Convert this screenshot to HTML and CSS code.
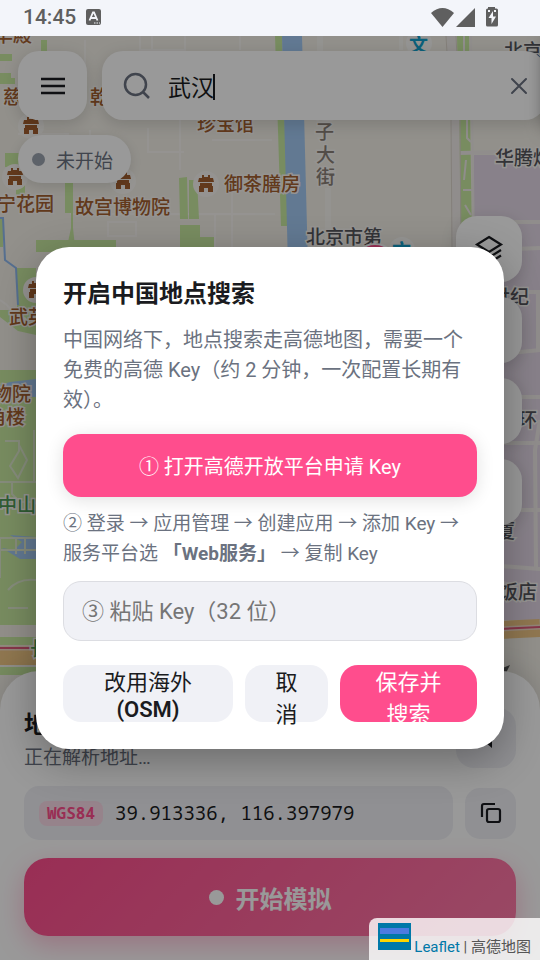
FILE: index.html
```
<!DOCTYPE html>
<html lang="zh-CN">
<head>
  <meta charset="UTF-8">
  <meta name="viewport" content="width=device-width, initial-scale=1.0">
  <title>地点搜索</title>
  <link rel="stylesheet" href="styles.css">
</head>
<body>

<header class="status-bar">
  <span class="clock">14:45</span>
  <svg class="app-badge" width="15" height="16" viewBox="0 0 15 16">
    <rect width="15" height="16" rx="2" fill="#5f5f5f"/>
    <path d="M3.500 11.500 7 3.500h1l3.500 8M5 9h5" fill="none" stroke="#f3f5fa" stroke-width="1.800"/>
    <path d="M8 14h1.500M10.500 14h1.500M13 14h1" stroke="#f3f5fa" stroke-width="1.200"/>
  </svg>
  <span class="spacer"></span>
  <svg width="68" height="20" viewBox="0 0 68 20" fill="#5f5f5f">
    <path d="M0 6Q11.500-4 23 6L11.500 20z"/>
    <path d="M25 20 44 1v19z"/>
    <path d="M57 1.500v-1.500h7v1.500h1.500q1.500 0 1.500 1.500v15q0 1.500-1.500 1.500h-9q-1.500 0-1.500-1.500v-15q0-1.500 1.500-1.500z"/>
    <path d="M62 4 57.500 11h3v6L65 9.500h-3zM57 3h2v2h-2zM63 3h2v2h-2z" fill="#f3f5fa"/>
  </svg>
</header>

<main class="app">
  <svg class="map" viewBox="0 36 540 924" preserveAspectRatio="xMinYMin slice" aria-hidden="true">
    <defs>
      <g id="temple">
        <circle r="13" fill="#f8f6f2"/>
        <path d="M-4-9h2v2h4v-2h2v3h3l1 4h-16l1-4h3zM-6-1h12v3h1v6H2V4h-4v4h-5V2h1z" fill="#a35f2f"/>
      </g>
    </defs>
    <rect y="36" width="540" height="924" fill="#f3f0e8"/>

    <!-- minor roads -->
    <g fill="none" stroke="#fbfaf8" stroke-width="2" opacity="0.6">
      <path d="M85 40v60M140 36v14h45v-14M152 36v84M240 36v14M18 134h50v45M90 130v50M148 128v24h36M180 120v50M212 140h60M70 214h205M215 214v33M232 190v57M108 222h28v14h-28zM0 300q14 8 14 20"/>
      <path d="M320 36v84M328 188v59" stroke-width="6"/>
      <path d="M401 36v14" stroke-width="4"/>
    </g>

    <!-- parks -->
    <g fill="#c8eaa0">
      <path d="M41 40h6v12h-6zM0 54h12v7H0zM0 73h11v5h4v6H0zM5 153h20v42h-9v-28H5zM65 183h8v45l2 19h-8l4-19v-15h-6zM179 178l8-1 1 42h-8zM189 180h8l2 39h-10zM180 225h20v12h14v10h-34z"/>
      <path d="M275 36h7l6 190h-7z"/>
      <path d="M457 36h12l3 211h-11z"/>
      <path d="M0 218h3v29H0zM17 268h19v67l-18-4-18-14v-7h17zM0 370h36v57H0zM0 427h36v198H0zM0 637h36v8H0zM0 667h60v8H0zM36 240h80v12H36z"/>
    </g>
    <path d="M282 36h20l6 230h-20z" fill="#a3caf4"/>
    <path d="M10 382l26-3v18H0v-12zM10 535l26 2v22H20L2 548l12 2 8-8z" fill="#a3caf4"/>
    <path d="M0 218h3l2 42 11 8 2 37" fill="none" stroke="#8fbaf0" stroke-width="2"/>

    <!-- right side blocks -->
    <path d="M474 155h66v465H474z" fill="#e3d8e6"/>
    <g fill="none" stroke="#f0ece9" stroke-width="4">
      <path d="M460 153l40-1M470 222h70M490 250l50-2M500 292h40M500 354l40-4M500 397h40M500 443h40M500 510h40M500 566l40 3M538 290v62M540 420l-5 30 1 117"/>
      <path d="M451 36l4 84 1 130" stroke-width="9"/>
      <path d="M471 36l3 211M463 190h9M464 36v18M467 120v18l4 4M466 160l-2 20M465 205l6 10" stroke-width="2"/>
    </g>
    <path d="M446 36l5 84 1 130M456 36l4 84 1 130" fill="none" stroke="#dcd5cc" stroke-width="1"/>

    <!-- park paths on the left -->
    <g fill="none" stroke="#dfe9cf" stroke-width="2">
      <path d="M5 441h14v10l-9 15 8 12 9-18-8-15M0 482h36M12 482v12l8 8h16M0 538v40M0 538h36M16 538v16M25 538v16M0 550h36M8 590q10-12 28-10M8 608h20M34 430v52"/>
      <path d="M0 631h36" stroke="#f3efe6" stroke-width="11"/>
    </g>
    <!-- ring road -->
    <path d="M0 656h40M500 630l40-2" fill="none" stroke="#f0c785" stroke-width="18"/>
    <path d="M0 648h40M500 629l40-2" fill="none" stroke="#f3dcc8" stroke-width="5"/>
    <path d="M0 648h40M500 629l40-2" fill="none" stroke="#df5a7b" stroke-width="2"/>

    <use href="#temple" x="31" y="126"/>
    <use href="#temple" x="15" y="177"/>
    <use href="#temple" x="123" y="181"/>
    <use href="#temple" x="206" y="184"/>
    <use href="#temple" x="36" y="290"/>
    <g class="label place">
      <text x="-6" y="42">华殿</text>
      <text x="3" y="104">慈宁宫</text>
      <text x="90" y="104">乾清宫</text>
      <text x="197" y="131">珍宝馆</text>
      <text x="-3" y="211">宁花园</text>
      <text x="75" y="214">故宫博物院</text>
      <text x="224" y="191">御茶膳房</text>
      <text x="9" y="324">武英殿</text>
      <text x="-7" y="401">物院</text>
      <text x="-13" y="424">角楼</text>
    </g>
    <g class="label park"><text x="-2" y="512">中山公园</text><text x="30" y="656">长安</text></g>
    <g class="label road">
      <text x="315" y="118">池</text>
      <text x="315" y="139">子</text>
      <text x="316" y="162">大</text>
      <text x="316" y="184">街</text>
    </g>
    <g class="label building">
      <text x="306" y="244">北京市第</text>
      <text x="504" y="58">北京</text>
      <text x="495" y="165">华腾烟</text>
      <text x="491" y="304">世纪</text>
      <text x="518" y="427">环</text>
      <text x="496" y="538">厦</text>
      <text x="499" y="599">饭店</text>
    </g>
    <circle cx="419" cy="43" r="13" fill="#f8f8f6"/>
    <circle cx="402" cy="250" r="13" fill="#f8f8f6"/>
    <g class="label school"><text x="409" y="52">文</text><text x="392" y="258">文</text></g>
    <circle cx="375" cy="265" r="21" fill="#ff4d8d" stroke="#fff" stroke-width="2"/>
    <path d="M500 669l10-4-5 10z" fill="#555"/>
  </svg>

  <div class="top-bar">
    <button class="menu-button" type="button" aria-label="菜单">
      <svg width="26" height="20" viewBox="0 0 26 20"><path d="M1 3h24M1 10h24M1 17h24" fill="none" stroke="currentColor" stroke-width="2.500"/></svg>
    </button>
    <div class="search">
      <svg width="28" height="28" viewBox="0 0 28 28"><path d="M23 12.500a10.500 10.500 0 1 1-21 0 10.500 10.500 0 0 1 21 0zM19.500 19.500 26 26" fill="none" stroke="currentColor" stroke-width="2.500"/></svg>
      <div class="search-field">
        <input type="text" value="武汉" aria-label="搜索地点">
        <span class="caret"></span>
      </div>
      <button class="clear" type="button" aria-label="清除">
        <svg width="18" height="18" viewBox="0 0 18 18"><path d="M2 2 16 16M16 2 2 16" fill="none" stroke="currentColor" stroke-width="2" stroke-linecap="round"/></svg>
      </button>
    </div>
  </div>

  <div class="state"><span class="state-dot"></span>未开始</div>

  <div class="tools">
    <button type="button" aria-label="图层">
      <svg width="30" height="30" viewBox="0 0 30 30"><path d="M15 3 27 10.500 15 18 3 10.500zM3 16l12 7.500L27 16M3 21.500 15 29l12-7.500" fill="none" stroke="currentColor" stroke-width="2.200"/></svg>
    </button>
    <button type="button" aria-label="定位"></button>
    <button type="button" aria-label="收藏"></button>
    <button type="button" aria-label="路线"></button>
  </div>

  <section class="sheet">
    <div class="sheet-head">
      <div>
        <h1>地图中心</h1>
        <p>正在解析地址…</p>
      </div>
      <button class="soft-button go" type="button" aria-label="导航">
        <svg width="26" height="26" viewBox="0 0 26 26"><path d="M4 13 19 3v20l-6-5-6 4 2-8z" fill="currentColor"/></svg>
      </button>
    </div>
    <div class="coord-row">
      <div class="coords"><span class="datum">WGS84</span><span>39.913336, 116.397979</span></div>
      <button class="soft-button" type="button" aria-label="复制">
        <svg width="22" height="22" viewBox="0 0 22 22" fill="none" stroke="currentColor" stroke-width="2.200"><rect x="7" y="7" width="13" height="13" rx="2"/><path d="M2 15V4q0-2 2-2h11"/></svg>
      </button>
    </div>
    <button class="start" type="button"><span class="start-dot"></span>开始模拟</button>
  </section>

  <div class="backdrop">
    <div class="modal" role="dialog" aria-labelledby="modal-title">
      <h2 id="modal-title">开启中国地点搜索</h2>
      <p class="intro">中国网络下，地点搜索走高德地图，需要一个免费的高德 Key（约 2 分钟，一次配置长期有效）。</p>
      <button class="open-platform" type="button">① 打开高德开放平台申请 Key</button>
      <p class="steps">② 登录 → 应用管理 → 创建应用 → 添加 Key → 服务平台选 <b>「Web服务」</b> → 复制 Key</p>
      <input class="key-input" type="text" placeholder="③ 粘贴 Key（32 位）" aria-label="粘贴 Key">
      <div class="actions">
        <button class="osm" type="button"><span>改用海外<br><b>(OSM)</b></span></button>
        <button type="button"><span>取<br>消</span></button>
        <button class="save" type="button"><span>保存并<br>搜索</span></button>
      </div>
    </div>
  </div>

  <div class="attribution">
    <svg width="33" height="27" viewBox="0 0 33 27"><path fill="#0078a8" d="M0 0h33v27H0z"/><path fill="#4c7be1" d="M2 5h29v6H2z"/><path fill="#ffd500" d="M2 16h29v3H2z"/></svg>
    <span><a href="#">Leaflet</a> | 高德地图</span>
  </div>
</main>

</body>
</html>
```
FILE: styles.css
```
* {
  box-sizing: border-box;
}

body {
  margin: 0;
  min-height: 100vh;
  display: flex;
  flex-direction: column;
  font-family: Roboto, "Noto Sans CJK SC", sans-serif;
  color: #1a1b20;
}

button, input {
  font-family: inherit;
  color: inherit;
  border: none;
  padding: 0;
}

button {
  display: flex;
  align-items: center;
  justify-content: center;
  cursor: pointer;
}

h1, h2, p {
  margin: 0;
}

.status-bar {
  display: flex;
  align-items: center;
  height: 36px;
  padding: 0 41px 2px 23px;
  background: #f3f5fa;
  color: #5f5f5f;
}

.clock {
  font-size: 21px;
  font-weight: 500;
}

.app-badge {
  margin-left: 10px;
}

.spacer {
  flex: 1;
}

.app {
  flex: 1;
  position: relative;
  display: flex;
  flex-direction: column;
  overflow: hidden;
}

.map {
  position: absolute;
  inset: 0;
  width: 100%;
  height: 100%;
}

/* map labels */
.label {
  font-size: 19px;
  font-weight: 500;
  stroke: #f8f6f2;
  stroke-width: 3px;
  paint-order: stroke;
}

.place { fill: #a35f2f; }
.park { fill: #4f9a55; }
.road { fill: #8b8178; }
.building { fill: #55555c; }
.school { fill: #12a0cc; font-weight: 700; }

.top-bar, .state, .tools, .sheet {
  position: relative;
}

.top-bar {
  display: flex;
  gap: 15px;
  padding: 15px 0 0 18px;
  margin-right: -6px;
}

.menu-button, .search {
  height: 69px;
  border-radius: 21px;
  background: #fff;
  box-shadow: 0 4px 16px rgba(0, 0, 0, 0.15);
}

.menu-button {
  width: 69px;
}

.search {
  flex: 1;
  display: flex;
  align-items: center;
  gap: 17px;
  padding: 0 18px 0 21px;
  color: #6b7280;
}

.search::after {
  content: "";
  position: absolute;
  top: 8px;
  right: -20px;
  width: 20px;
  height: 84px;
  box-shadow: 0 0 18px rgba(0, 0, 0, 0.6);
}

.search-field {
  flex: 1;
  position: relative;
}

.search input {
  width: 100%;
  height: 40px;
  font-size: 23px;
  color: #1a1b20;
  background: none;
  outline: none;
}

.caret {
  position: absolute;
  left: 45px;
  top: 8px;
  width: 2px;
  height: 26px;
  background: #1a1b20;
}

.clear {
  background: none;
}

.state {
  align-self: flex-start;
  display: flex;
  align-items: center;
  gap: 11px;
  height: 48px;
  margin: 15px 0 0 18px;
  padding: 0 18px 0 14px;
  border-radius: 24px;
  background: #fff;
  box-shadow: 0 3px 12px rgba(0, 0, 0, 0.12);
  color: #6b7280;
  font-size: 19px;
}

.state-dot {
  width: 13px;
  height: 13px;
  border-radius: 50%;
  background: #9ca3af;
}

.tools {
  align-self: flex-end;
  display: flex;
  flex-direction: column;
  gap: 15px;
  margin: 33px 18px 24px 0;
}

.tools button {
  width: 66px;
  height: 66px;
  border-radius: 21px;
  background: #fff;
  box-shadow: 0 4px 16px rgba(0, 0, 0, 0.15);
}

.sheet {
  display: flex;
  flex-direction: column;
  gap: 18px;
  margin-top: auto;
  padding: 37px 24px 24px;
  border-radius: 39px 39px 0 0;
  background: #fff;
  box-shadow: 0 -4px 24px rgba(0, 0, 0, 0.12);
}

.sheet-head {
  display: flex;
  justify-content: space-between;
  margin-bottom: -6px;
}

.sheet h1 {
  font-size: 24px;
  line-height: 34px;
}

.sheet p {
  color: #6b7280;
  font-size: 19px;
  line-height: 32px;
}

.soft-button {
  width: 51px;
  height: 51px;
  border-radius: 15px;
  background: #f0f1f6;
}

.go {
  width: 60px;
  height: 60px;
  border-radius: 18px;
}

.coord-row {
  display: flex;
  align-items: center;
  gap: 12px;
}

.coords {
  flex: 1;
  display: flex;
  align-items: center;
  gap: 12px;
  height: 54px;
  padding: 0 15px;
  border-radius: 15px;
  background: #f0f1f6;
  font-family: "Noto Sans Mono", "DejaVu Sans Mono", monospace;
  font-size: 19px;
}

.datum {
  padding: 0 8px;
  border-radius: 8px;
  background: #fbdbe8;
  color: #ff4d8d;
  font-size: 16px;
  font-weight: 700;
  line-height: 25px;
}

.start {
  gap: 12px;
  height: 78px;
  border-radius: 24px;
  background: linear-gradient(135deg, #ff4d8d, #ff7aa8);
  box-shadow: 0 9px 27px rgba(255, 77, 141, 0.35);
  color: #fff;
  font-size: 24px;
  font-weight: 700;
}

.start-dot {
  width: 15px;
  height: 15px;
  border-radius: 50%;
  background: #fff;
}

.backdrop {
  position: absolute;
  inset: 0;
  display: flex;
  align-items: center;
  padding: 0 36px;
  background: rgba(0, 0, 0, 0.4);
}

.modal {
  flex: 1;
  min-width: 0;
  padding: 27px;
  border-radius: 33px;
  background: #fff;
  box-shadow: 0 12px 40px rgba(0, 0, 0, 0.3);
}

.modal h2 {
  font-size: 24px;
  line-height: 40px;
}

.intro {
  margin-top: 11px;
  color: #6b7280;
  font-size: 20px;
  line-height: 30px;
}

.open-platform {
  width: 100%;
  height: 63px;
  margin: 19px 0 12px;
  border-radius: 18px;
  background: #ff4d8d;
  box-shadow: 0 3px 18px rgba(0, 0, 0, 0.12);
  color: #fff;
  font-size: 20px;
}

.steps {
  color: #6b7280;
  font-size: 19px;
  line-height: 30px;
}

.key-input {
  display: block;
  width: 100%;
  height: 60px;
  margin: 12px 0 24px;
  padding: 0 18px;
  border: 1px solid #dcdde2;
  border-radius: 18px;
  background: #f0f1f6;
  font-size: 22px;
}

.key-input::placeholder {
  color: #757575;
}

.actions {
  display: grid;
  grid-template-columns: 170fr 83fr 137fr;
  gap: 12px;
}

.actions button {
  align-items: flex-start;
  height: 57px;
  padding-top: 2px;
  border-radius: 18px;
  background: #f0f1f6;
  font-size: 22px;
  line-height: 32px;
}

.actions b {
  font-weight: 600;
}

.actions .osm {
  padding-top: 4px;
  line-height: 27px;
}

/* the second line may run past the button */
.actions .save {
  background: #ff4d8d;
  color: #fff;
}

.attribution {
  position: absolute;
  right: 0;
  bottom: 0;
  display: flex;
  gap: 3px;
  height: 42px;
  padding: 5px 9px 0;
  border-radius: 8px 0 0 0;
  background: rgba(255, 255, 255, 0.8);
  color: #555;
  font-size: 15px;
}

.attribution span {
  padding-top: 14px;
  line-height: 20px;
}

.attribution a {
  color: #0078a8;
  text-decoration: none;
}
```
